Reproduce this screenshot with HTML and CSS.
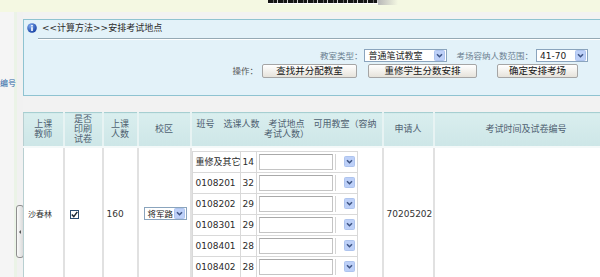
FILE: index.html
```html
<!DOCTYPE html>
<html lang="zh-CN">
<head>
    <meta charset="UTF-8">
    <title>安排考试地点</title>
    <link rel="stylesheet" href="styles.css">
</head>
<body>
    <div class="topbar">
        <span class="banner"></span><span class="banner-fade"></span>
    </div>

    <div class="layout">
        <div class="side"><span class="side-link">编号</span></div>
        <div class="gutter">
            <div class="handle"><span class="handle-arrow"></span></div>
        </div>

        <div class="main">
            <!-- operation panel -->
            <div class="infobox">
                <div class="info-title">
                    <svg class="info-icon" width="10" height="10" viewBox="0 0 10 10">
                        <defs>
                            <radialGradient id="ig" cx="35%" cy="30%" r="70%">
                                <stop offset="0" stop-color="#7fa9ee"/>
                                <stop offset="1" stop-color="#1d47a8"/>
                            </radialGradient>
                        </defs>
                        <circle cx="5" cy="5" r="4.8" fill="url(#ig)"/>
                        <rect x="4.2" y="2" width="1.6" height="1.5" fill="#fff"/>
                        <rect x="4.2" y="4.2" width="1.6" height="3.8" fill="#fff"/>
                    </svg>
                    <span>&lt;&lt;计算方法&gt;&gt;安排考试地点</span>
                </div>
                <div class="info-rule"></div>

                <div class="info-row row-filter">
                    <label>教室类型：</label>
                    <span class="select sel-type">
                        <span class="sel-text">普通笔试教室</span>
                        <svg class="drop" width="11" height="11" viewBox="0 0 11 11"><rect x="0.5" y="0.5" width="10" height="10" rx="1" fill="#bdd0f8" stroke="#aec4ee"/><path d="M3 4.2 L5.5 6.7 L8 4.2" fill="none" stroke="#3f5585" stroke-width="1.6"/></svg>
                    </span>
                    <label class="lbl-range">考场容纳人数范围：</label>
                    <span class="select sel-range">
                        <span class="sel-text">41-70</span>
                        <svg class="drop" width="11" height="11" viewBox="0 0 11 11"><rect x="0.5" y="0.5" width="10" height="10" rx="1" fill="#bdd0f8" stroke="#aec4ee"/><path d="M3 4.2 L5.5 6.7 L8 4.2" fill="none" stroke="#3f5585" stroke-width="1.6"/></svg>
                    </span>
                </div>

                <div class="info-row row-actions">
                    <label>操作：</label>
                    <button class="btn btn-find">查找并分配教室</button>
                    <button class="btn btn-retake">重修学生分数安排</button>
                    <button class="btn btn-confirm">确定安排考场</button>
                </div>
            </div>

            <!-- course table -->
            <table class="grid">
                <colgroup>
                    <col style="width: 40px">
                    <col style="width: 39px">
                    <col style="width: 35px">
                    <col style="width: 53px">
                    <col style="width: 192px">
                    <col style="width: 51px">
                    <col style="width: 184px">
                </colgroup>
                <thead>
                    <tr>
                        <th>上课<br>教师</th>
                        <th>是否<br>印刷<br>试卷</th>
                        <th>上课<br>人数</th>
                        <th>校区</th>
                        <th>班号　选课人数　考试地点　可用教室（容纳<br>考试人数）</th>
                        <th>申请人</th>
                        <th>考试时间及试卷编号</th>
                    </tr>
                </thead>
                <tbody>
                    <tr>
                        <td class="c-teacher">沙春林</td>
                        <td class="c-print">
                            <span class="check"><svg width="7" height="7" viewBox="0 0 7 7"><path d="M0.8 3.4 L2.8 5.6 L6.3 0.9" fill="none" stroke="#1d2a36" stroke-width="1.5"/></svg></span>
                        </td>
                        <td class="c-num">160</td>
                        <td class="c-campus">
                            <span class="select sel-campus">
                                <span class="sel-text">将军路</span>
                                <svg class="drop" width="11" height="11" viewBox="0 0 11 11"><rect x="0.5" y="0.5" width="10" height="10" rx="1" fill="#bdd0f8" stroke="#aec4ee"/><path d="M3 4.2 L5.5 6.7 L8 4.2" fill="none" stroke="#3f5585" stroke-width="1.6"/></svg>
                            </span>
                        </td>
                        <td class="c-rooms">
                            <table class="rooms">
                                <colgroup>
                                    <col style="width: 48px">
                                    <col style="width: 16px">
                                    <col style="width: 101px">
                                </colgroup>
                                <tr><td class="r-class">重修及其它</td><td class="r-count">14</td><td class="r-combo"><span class="combo-input"></span><span class="combo-btn"><svg width="11" height="11" viewBox="0 0 11 11"><rect x="0.5" y="0.5" width="10" height="10" rx="1" fill="#bdd0f8" stroke="#aec4ee"/><path d="M3 4.2 L5.5 6.7 L8 4.2" fill="none" stroke="#3f5585" stroke-width="1.6"/></svg></span></td></tr>
                                <tr><td class="r-class">0108201</td><td class="r-count">32</td><td class="r-combo"><span class="combo-input"></span><span class="combo-btn"><svg width="11" height="11" viewBox="0 0 11 11"><rect x="0.5" y="0.5" width="10" height="10" rx="1" fill="#bdd0f8" stroke="#aec4ee"/><path d="M3 4.2 L5.5 6.7 L8 4.2" fill="none" stroke="#3f5585" stroke-width="1.6"/></svg></span></td></tr>
                                <tr><td class="r-class">0108202</td><td class="r-count">29</td><td class="r-combo"><span class="combo-input"></span><span class="combo-btn"><svg width="11" height="11" viewBox="0 0 11 11"><rect x="0.5" y="0.5" width="10" height="10" rx="1" fill="#bdd0f8" stroke="#aec4ee"/><path d="M3 4.2 L5.5 6.7 L8 4.2" fill="none" stroke="#3f5585" stroke-width="1.6"/></svg></span></td></tr>
                                <tr><td class="r-class">0108301</td><td class="r-count">29</td><td class="r-combo"><span class="combo-input"></span><span class="combo-btn"><svg width="11" height="11" viewBox="0 0 11 11"><rect x="0.5" y="0.5" width="10" height="10" rx="1" fill="#bdd0f8" stroke="#aec4ee"/><path d="M3 4.2 L5.5 6.7 L8 4.2" fill="none" stroke="#3f5585" stroke-width="1.6"/></svg></span></td></tr>
                                <tr><td class="r-class">0108401</td><td class="r-count">28</td><td class="r-combo"><span class="combo-input"></span><span class="combo-btn"><svg width="11" height="11" viewBox="0 0 11 11"><rect x="0.5" y="0.5" width="10" height="10" rx="1" fill="#bdd0f8" stroke="#aec4ee"/><path d="M3 4.2 L5.5 6.7 L8 4.2" fill="none" stroke="#3f5585" stroke-width="1.6"/></svg></span></td></tr>
                                <tr><td class="r-class">0108402</td><td class="r-count">28</td><td class="r-combo"><span class="combo-input"></span><span class="combo-btn"><svg width="11" height="11" viewBox="0 0 11 11"><rect x="0.5" y="0.5" width="10" height="10" rx="1" fill="#bdd0f8" stroke="#aec4ee"/><path d="M3 4.2 L5.5 6.7 L8 4.2" fill="none" stroke="#3f5585" stroke-width="1.6"/></svg></span></td></tr>
                            </table>
                        </td>
                        <td class="c-applicant">70205202</td>
                        <td class="c-time"></td>
                    </tr>
                </tbody>
            </table>
        </div>
    </div>
</body>
</html>
```

FILE: styles.css
```css
* {
    box-sizing: border-box;
}

body {
    margin: 0;
    background: #f2f2f2;
    font-family: "DejaVu Sans", "Noto Sans CJK SC", sans-serif;
    font-size: 9px;
    color: #333;
    overflow: hidden;
}

/* top strip with the cut-off banner */
.topbar {
    height: 12px;
    background: #f4f8e2;
    white-space: nowrap;
}

.banner {
    display: inline-block;
    vertical-align: top;
    margin-left: 268px;
    width: 110px;
    height: 4px;
    border-bottom: 1px solid #fff;
    background: repeating-linear-gradient(to right, #151515 0 5px, #6a6a6a 5px 6px, #151515 6px 9px, #cfcfcf 9px 10px);
}

.banner-fade {
    display: inline-block;
    vertical-align: top;
    width: 20px;
    height: 5px;
    background: linear-gradient(to right, #b8b8b8, #f4f8e2);
}

.layout {
    display: flex;
    height: 265px;
}

.side {
    width: 17px;
    background: #f5f5f5;
    border-right: 3px solid #ebf3e7;
}

.side-link {
    display: block;
    margin-top: 68px;
    font-size: 8px;
    line-height: 8px;
    color: #2f68a6;
    white-space: nowrap;
}

.gutter {
    width: 6px;
    background: #f1f1f1;
}

.handle {
    display: flex;
    align-items: center;
    justify-content: center;
    width: 8px;
    height: 53px;
    margin: 193px 0 0 -1px;
    border: 1px solid #8e8e8e;
    border-radius: 3px;
    background: linear-gradient(to right, #fafafa, #dadada);
}

.handle-arrow {
    width: 0;
    height: 0;
    border-top: 2px solid transparent;
    border-bottom: 2px solid transparent;
    border-right: 2px solid #555;
}

.main {
    flex: 1;
    min-width: 0;
    overflow: hidden;
}

/* operation panel */
.infobox {
    height: 77px;
    margin-top: 7px;
    border: 1px solid #8fc3d1;
    border-right: none;
    background: #e3f2f9;
}

.info-title {
    display: flex;
    align-items: center;
    height: 13px;
    padding: 3px 0 0 3px;
    line-height: 10px;
    color: #2b2b2b;
}

.info-icon {
    margin-right: 5px;
    flex-shrink: 0;
}

.info-rule {
    height: 2px;
    margin: 5px 0 0 14px;
    border-top: 1px solid #95a9b4;
    border-bottom: 1px solid #fff;
}

.info-row {
    display: flex;
    align-items: center;
    justify-content: flex-end;
    white-space: nowrap;
}

.info-row label {
    font-size: 8.5px;
    line-height: 10px;
    color: #555;
}

.row-filter {
    height: 13px;
    margin-top: 9px;
    padding-right: 12px;
}

.row-filter label {
    color: #6a7f90;
    margin-right: 2px;
}

.row-filter .lbl-range {
    margin-right: 3px;
}

.row-actions {
    height: 14px;
    margin-top: 2px;
    padding-right: 22px;
}

.row-actions label {
    margin-right: 4px;
}

.select {
    display: inline-flex;
    align-items: center;
    justify-content: space-between;
    height: 13px;
    padding: 0 1px 0 3px;
    border: 1px solid #8aa4bd;
    background: #fff;
    color: #222;
}

.sel-text {
    font-size: 9px;
    line-height: 10px;
}

.sel-type {
    width: 83px;
    margin-right: 9px;
}

.sel-range {
    width: 52px;
}

.sel-campus {
    width: 43px;
    height: 13px;
}

.sel-campus .sel-text {
    font-size: 8.5px;
}

.btn {
    height: 14px;
    padding: 0;
    border: 1px solid #a5a5a5;
    border-radius: 2px;
    background: linear-gradient(#ffffff, #e6e3db);
    font-family: "DejaVu Sans", "Noto Sans CJK SC", sans-serif;
    font-size: 9.5px;
    line-height: 12px;
    color: #151515;
}

.btn-find {
    width: 95px;
    margin-right: 11px;
}

.btn-retake {
    width: 109px;
    margin-right: 20px;
}

.btn-confirm {
    width: 81px;
}

/* course table */
.grid {
    width: 594px;
    margin-top: 16px;
    border-collapse: collapse;
    table-layout: fixed;
    background: #fff;
}

.grid th {
    height: 34px;
    padding: 0 2px;
    border-top: 1px solid #a6cfd1;
    border-left: 2px solid #e7f3f3;
    border-bottom: 2px solid #f4f9f9;
    background: linear-gradient(#d9eeee, #cde6e7);
    font-size: 9px;
    font-weight: normal;
    line-height: 10px;
    color: #4e6070;
    text-align: center;
}

.grid th:first-child,
.grid > tbody > tr > td:first-child {
    border-left: 1px solid #b8cfd1;
}

.grid > tbody > tr > td {
    height: 133px;
    padding: 0;
    border-left: 2px solid #e1e1e1;
    vertical-align: middle;
    white-space: nowrap;
}

.c-teacher {
    padding-left: 4px !important;
    font-size: 8px;
    color: #333;
}

.c-print {
    padding-left: 5px !important;
}

.check {
    display: inline-flex;
    align-items: center;
    justify-content: center;
    width: 9px;
    height: 9px;
    border: 1px solid #2a4d72;
    background: #fff;
    vertical-align: middle;
}

.c-num,
.c-applicant {
    padding-left: 3px !important;
    font-size: 9px;
    color: #333;
}

.c-campus {
    padding-left: 5px !important;
}

.c-rooms {
    vertical-align: top !important;
    padding-top: 3px !important;
}

.rooms {
    width: 165px;
    border-collapse: collapse;
    table-layout: fixed;
}

.rooms td {
    height: 21px;
    padding: 0;
    border: 1px solid #d9d9d9;
    font-size: 9px;
    line-height: 10px;
    color: #2b2b2b;
    vertical-align: middle;
}

.r-class {
    padding-left: 3px !important;
}

.r-count {
    padding-left: 2px !important;
}

.r-combo {
    padding-left: 2px !important;
}

.r-combo .combo-input,
.r-combo .combo-btn {
    display: inline-block;
    vertical-align: middle;
    height: 16px;
}

.combo-input {
    width: 74px;
    border: 1px solid #c4c4c4;
    border-top-color: #a9a9a9;
    background: #fff;
}

.combo-btn {
    width: 22px;
    margin-left: 2px;
    padding: 2px 2px 0 0;
    border-left: 1px solid #d4d4d4;
    text-align: right;
}

.combo-btn svg {
    display: inline-block;
}
```
